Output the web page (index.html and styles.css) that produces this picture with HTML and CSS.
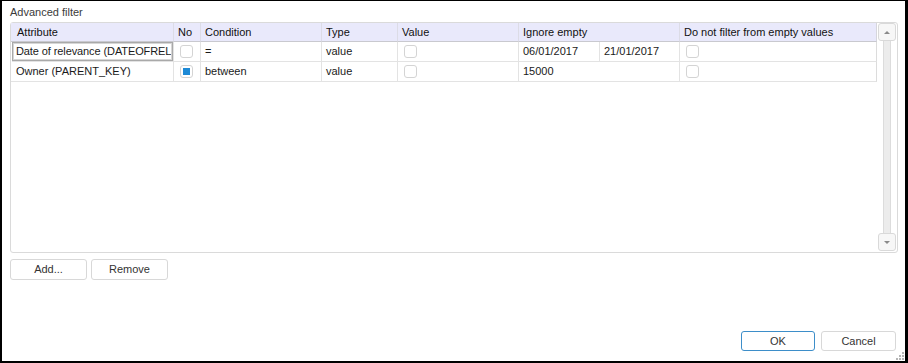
FILE: index.html
```html
<!DOCTYPE html>
<html>
<head>
<meta charset="utf-8">
<link rel="stylesheet" href="styles.css">
</head>
<body>
<div class="window">
  <div class="title">Advanced filter</div>
  <div class="gridbox">
    <div class="table">
      <div class="hcell pad6">Attribute</div>
      <div class="hcell">No</div>
      <div class="hcell">Condition</div>
      <div class="hcell">Type</div>
      <div class="hcell">Value</div>
      <div class="hcell span2">Ignore empty</div>
      <div class="hcell last">Do not filter from empty values</div>

      <div class="cell edit"><span class="clip">Date of relevance (DATEOFREL</span></div>
      <div class="cell"><span class="cb"></span></div>
      <div class="cell">=</div>
      <div class="cell">value</div>
      <div class="cell"><span class="cb"></span></div>
      <div class="cell">06/01/2017</div>
      <div class="cell">21/01/2017</div>
      <div class="cell last"><span class="cb"></span></div>

      <div class="cell pad5">Owner (PARENT_KEY)</div>
      <div class="cell"><span class="cb checked"></span></div>
      <div class="cell">between</div>
      <div class="cell">value</div>
      <div class="cell"><span class="cb"></span></div>
      <div class="cell span2">15000</div>
      <div class="cell last"><span class="cb"></span></div>
    </div>
    <div class="scrollbar">
      <div class="sbtn"><span class="arrow up"></span></div>
      <div class="track"></div>
      <div class="sbtn"><span class="arrow down"></span></div>
    </div>
  </div>
  <div class="actions">
    <button class="btn">Add...</button>
    <button class="btn">Remove</button>
  </div>
  <div class="footer">
    <button class="btn ok">OK</button>
    <button class="btn cancel">Cancel</button>
  </div>
  <svg class="grip" width="8" height="8" viewBox="0 0 8 8">
    <rect x="6" y="0" width="2" height="2" fill="#b5b5b5"/>
    <rect x="3" y="3" width="2" height="2" fill="#b5b5b5"/>
    <rect x="6" y="3" width="2" height="2" fill="#b5b5b5"/>
    <rect x="0" y="6" width="2" height="2" fill="#b5b5b5"/>
    <rect x="3" y="6" width="2" height="2" fill="#b5b5b5"/>
    <rect x="6" y="6" width="2" height="2" fill="#b5b5b5"/>
  </svg>
</div>
</body>
</html>
```

FILE: styles.css
```css
html, body {
  margin: 0;
  padding: 0;
  background: #ffffff;
}

.window {
  position: relative;
  width: 908px;
  height: 363px;
  box-sizing: border-box;
  border-style: solid;
  border-color: #000;
  border-width: 1px 3px 2px 2px;
  padding: 0 7px 10px 8px;
  display: flex;
  flex-direction: column;
  font-family: "Liberation Sans", Arial, sans-serif;
  font-size: 11px;
  color: #1a1a1a;
  background: #fff;
}

.title {
  height: 21px;
  box-sizing: border-box;
  padding-top: 5px;
  line-height: 13px;
  color: #3a3a3a;
}

.gridbox {
  height: 231px;
  box-sizing: border-box;
  border: 1px solid #dadada;
  border-radius: 3px;
  display: flex;
  align-items: flex-start;
}

.table {
  width: 866px;
  display: grid;
  grid-template-columns: 163px 27px 121px 76px 121px 81px 80px 197px;
  grid-auto-rows: 20px;
  grid-template-rows: 19px;
}

.hcell {
  background: #e9e9fb;
  border-right: 1px solid #dcdce6;
  border-bottom: 1px solid #c9c9cf;
  padding-left: 4px;
  line-height: 18px;
  white-space: nowrap;
  overflow: hidden;
  color: #111;
}

.hcell.pad6 { padding-left: 6px; }
.hcell.span2 { grid-column: span 2; }
.hcell.last { border-right-color: #d6d6dc; }

.cell {
  border-right: 1px solid #e3e3e3;
  border-bottom: 1px solid #e3e3e3;
  padding-left: 4px;
  line-height: 19px;
  white-space: nowrap;
  overflow: hidden;
  display: flex;
  align-items: center;
}

.cell.pad5 { padding-left: 5px; }
.cell.span2 { grid-column: span 2; }
.cell.last { border-right-color: #dcdcdc; }

.cell.edit {
  padding-left: 4px;
  padding-right: 2px;
  box-shadow: inset 0 0 0 1px #a9a9a9, inset 0 0 0 2px #d6d6d6;
  margin: 0 0 0 1px;
  border-right-color: #e3e3e3;
}

.clip {
  display: block;
  overflow: hidden;
  white-space: nowrap;
  letter-spacing: -0.1px;
}

.cb {
  display: block;
  width: 11px;
  height: 11px;
  border: 1px solid #d4d4d4;
  border-radius: 3px;
  margin-left: 2px;
  background: #fff;
  position: relative;
}

.cb.checked::after {
  content: "";
  position: absolute;
  left: 2px;
  top: 2px;
  width: 7px;
  height: 7px;
  background: #1e8ad6;
}

.scrollbar {
  margin-left: 1px;
  width: 18px;
  height: 228px;
  display: flex;
  flex-direction: column;
  align-items: center;
}

.sbtn {
  width: 18px;
  height: 18px;
  box-sizing: border-box;
  border: 1px solid #d9d9d9;
  border-radius: 3px;
  background: #f7f7f7;
  display: flex;
  align-items: center;
  justify-content: center;
}

.arrow {
  width: 0;
  height: 0;
  border-left: 3px solid transparent;
  border-right: 3px solid transparent;
}

.arrow.up { border-bottom: 3px solid #8a8a8a; }
.arrow.down { border-top: 3px solid #8a8a8a; }

.track {
  flex: 1;
  width: 8px;
  box-sizing: border-box;
  background: #ececec;
  border-left: 1px solid #dcdcdc;
  border-right: 1px solid #dcdcdc;
}

.actions {
  margin-top: 6px;
  display: flex;
  gap: 4px;
}

.btn {
  font-family: "Liberation Sans", Arial, sans-serif;
  font-size: 11px;
  color: #333;
  background: #fff;
  border: 1px solid #d8d8d8;
  border-radius: 3px;
  padding: 0;
  width: 77px;
  height: 21px;
  line-height: 19px;
  text-align: center;
}

.footer {
  margin-top: auto;
  padding-right: 2px;
  display: flex;
  justify-content: flex-end;
  gap: 6px;
}

.footer .btn {
  height: 20px;
  line-height: 18px;
}

.btn.ok {
  width: 74px;
  border-color: #3d8ec9;
}

.btn.cancel {
  width: 75px;
}

.grip {
  position: absolute;
  right: 1px;
  bottom: 1px;
}
```
